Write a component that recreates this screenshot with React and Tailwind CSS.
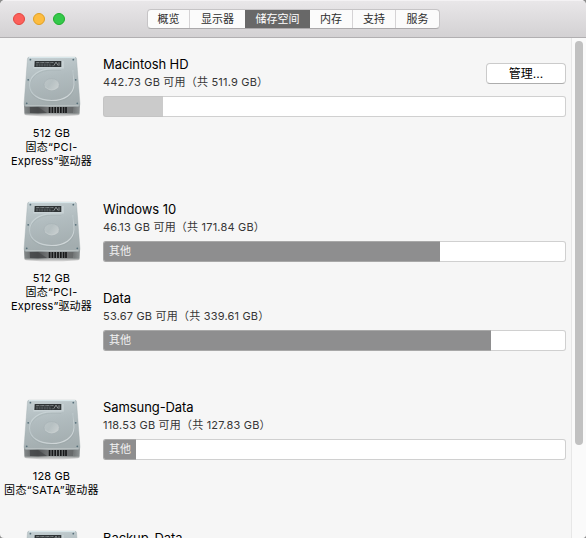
const FONT = 'font-[Inter,"Noto_Sans_CJK_SC",sans-serif]';

const tabs = [
  { label: '概览', cls: 'w-[42px]' },
  { label: '显示器', cls: 'w-[55px]' },
  { label: '储存空间', cls: 'w-[65px]', active: true },
  { label: '内存', cls: 'w-[43px]' },
  { label: '支持', cls: 'w-[43px]' },
  { label: '服务', cls: 'w-[43px]' },
];

const drives = [
  {
    height: 'h-[145px]',
    label: [
      { text: '512 GB', cls: 'tracking-[0.15px]' },
      { text: '固态“PCI-', cls: 'tracking-[0.3px]' },
      { text: 'Express”驱动器', cls: 'tracking-[0.15px]' },
    ],
    volumes: [{ name: 'Macintosh HD', free: '442.73 GB 可用（共 511.9 GB）', used: 60, light: true, manage: true }],
  },
  {
    height: 'h-[198px]',
    label: [
      { text: '512 GB', cls: 'tracking-[0.15px]' },
      { text: '固态“PCI-', cls: 'tracking-[0.3px]' },
      { text: 'Express”驱动器', cls: 'tracking-[0.15px]' },
    ],
    volumes: [
      { name: 'Windows 10', free: '46.13 GB 可用（共 171.84 GB）', used: 337 },
      { name: 'Data', free: '53.67 GB 可用（共 339.61 GB）', used: 388 },
    ],
  },
  {
    height: 'h-[131px]',
    label: [
      { text: '128 GB', cls: 'tracking-[0.15px]' },
      { text: '固态“SATA”驱动器', cls: 'tracking-[0.35px]' },
    ],
    volumes: [{ name: 'Samsung-Data', free: '118.53 GB 可用（共 127.83 GB）', used: 33 }],
  },
  {
    height: 'h-[131px]',
    label: [],
    volumes: [{ name: 'Backup-Data' }],
  },
];

function DriveIcon({ id }) {
  const body = `body-${id}`;
  const front = `front-${id}`;
  const rim = `rim-${id}`;
  const hub = `hub-${id}`;
  return (
    <svg width="60" height="62" viewBox="0 0 60 62" className="block">
      <defs>
        <linearGradient id={body} x1="0.1" y1="0" x2="0.3" y2="1">
          <stop offset="0" stopColor="#c3ced1" />
          <stop offset="0.45" stopColor="#b1bcbf" />
          <stop offset="1" stopColor="#a3adaf" />
        </linearGradient>
        <linearGradient id={front} x1="0" y1="0" x2="1" y2="0">
          <stop offset="0" stopColor="#858a8b" />
          <stop offset="0.12" stopColor="#6d7071" />
          <stop offset="0.25" stopColor="#4d4f50" />
          <stop offset="0.45" stopColor="#a0a3a3" />
          <stop offset="0.9" stopColor="#777b7c" />
          <stop offset="1" stopColor="#8f9596" />
        </linearGradient>
        <linearGradient id={rim} x1="0" y1="0" x2="0.6" y2="1">
          <stop offset="0" stopColor="#ced8da" />
          <stop offset="0.5" stopColor="#bbc6c9" />
          <stop offset="1" stopColor="#cfd6d8" />
        </linearGradient>
        <linearGradient id={hub} x1="0" y1="0" x2="1" y2="0.5">
          <stop offset="0" stopColor="#bcc5c7" />
          <stop offset="0.5" stopColor="#b6c0c2" />
          <stop offset="1" stopColor="#c6cdce" />
        </linearGradient>
      </defs>
      <ellipse cx="30" cy="58.6" rx="28" ry="1.7" fill="#000" opacity="0.17" />
      <path d="M2 47.5 L58 47.5 L57.6 57.2 Q57.5 58.3 56.3 58.3 L3.7 58.3 Q2.5 58.3 2.4 57.2Z" fill={`url(#${front})`} />
      <path d="M7.5 51 H51.5 L51 57 H8Z" fill="#555859" opacity="0.55" />
      <path d="M8 51 H16 L25 57 H8Z" fill="#424445" opacity="0.65" />
      <path d="M3 57.9H57" stroke="#a9adad" strokeWidth="0.7" />
      <path d="M7 1.2 H53 Q54.3 1.2 54.5 2.6 L58 48 Q58.1 50.2 56.5 50.2 H3.5 Q1.9 50.2 2 48 L5.5 2.6 Q5.7 1.2 7 1.2Z" fill={`url(#${body})`} stroke="#a0abae" strokeWidth="0.4" />
      <path d="M7 1.6H53" stroke="#dceaee" strokeWidth="1" />
      <path d="M3.5 49.8H56.5" stroke="#c4cbcc" strokeWidth="0.9" />
      <g transform="translate(0 -1)">
        <path d="M50.8 16.5 L52.2 29.5 C52.1 40 43 45.8 29.5 45.8 C17 45.8 7.4 40 7.6 30.5 C7.8 20.5 18 14.2 30 14.2 L39.2 14.2" fill="none" stroke="#8e999c" strokeWidth="1.2" opacity="0.2" transform="translate(0 .9)" />
        <path d="M39.5 13.9 H29.5 C17 13.9 7.6 20.7 7.6 30.2 C7.6 39.4 17 45.5 29.5 45.5 C42.5 45.5 51.7 39.3 52 29.5 C52.1 25 50.9 20 50.8 15" fill="none" stroke={`url(#${rim})`} strokeWidth="1.1" />
        <ellipse cx="29.6" cy="29.5" rx="7.6" ry="5.9" fill={`url(#${hub})`} stroke="#9faaad" strokeWidth="0.4" />
        <path d="M22.9 31.8 Q29.6 38 36.5 31.8" fill="none" stroke="#ccd3d4" strokeWidth="0.6" />
      </g>
      <path d="M11.8 5 H41.8 V12.5 H11.3Z" fill="#c8d2d5" />
      <path d="M12.7 4.9 H39.3 V11.1 H12.3Z" fill="#2e3335" />
      <path d="M14.2 6.6H31.5" stroke="#92999b" strokeWidth="0.8" strokeDasharray="3 0.5 1 0.5" />
      <path d="M14 8.2H28.5M14 9.8H32" stroke="#6f7678" strokeWidth="0.7" strokeDasharray="2 0.6" />
      <path d="M31.8 9.7 L34 6.1 L36.1 9.5M37 6.2V9.7" fill="none" stroke="#a4aaab" strokeWidth="0.8" />
      <g fill="#566f79">
        <circle cx="8.4" cy="3.7" r="0.9" />
        <circle cx="51.3" cy="3.7" r="0.9" />
        <circle cx="6.2" cy="23.8" r="0.9" />
        <circle cx="53.7" cy="23.8" r="0.9" />
        <circle cx="4.7" cy="47.3" r="0.9" />
        <circle cx="55.3" cy="47.3" r="0.9" />
      </g>
      <path d="M27 51H44V57H27Z" fill="#7b7e7f" />
      <path d="M27.6 51V57M30.4 51V57M33.2 51V57M36 51V57M38.8 51V57M41.6 51V57M44 51V57" stroke="#171819" strokeWidth="1.7" />
    </svg>
  );
}

function Volume({ volume }) {
  return (
    <div className="h-[89px] w-[463px]">
      <div className="flex h-[41px] justify-between">
        <div>
          <div className="h-[18px] whitespace-nowrap text-[13px] leading-[18px] tracking-[-0.08px] text-black">{volume.name}</div>
          {volume.free && (
            <div className="h-[18px] whitespace-nowrap text-[11px] leading-[18px] tracking-[0.2px] text-[#363636]">{volume.free}</div>
          )}
        </div>
        {volume.manage && (
          <button className="mt-2 h-[21px] w-20 rounded-[4px] border border-[#cbcbcb] border-b-[#adadad] bg-white text-[12px] leading-[19px] text-black">
            管理...
          </button>
        )}
      </div>
      {volume.used && (
        <div className="flex h-[21px]">
          <div
            className={`h-full shrink-0 rounded-l-[3px] border border-r-0 pl-[5px] text-[11px] leading-[19px] text-[#f2f2f2] ${
              volume.light ? 'border-[#c4c4c4] bg-[#cbcbcb]' : 'border-[#a8a8a8] bg-[#8e8e8f]'
            }`}
            style={{ width: volume.used }}
          >
            {volume.light ? '' : '其他'}
          </div>
          <div className="h-full flex-1 rounded-r-[3px] border border-l-0 border-[#d0d0d0] bg-white" />
        </div>
      )}
    </div>
  );
}

export default function App() {
  return (
    <div className={`flex h-[538px] w-[586px] flex-col overflow-hidden bg-[#8c8c8c] ${FONT}`}>
      <div className="flex h-full flex-col overflow-hidden rounded-t-[5px] rounded-b-[4px] bg-[#f6f6f6]">
        <header className="flex h-[38px] shrink-0 border-t border-b border-t-[#f4f2f4] border-b-[#b1afb1] bg-linear-to-b from-[#e9e7e9] to-[#d3d1d3]">
          <div className="mt-3 ml-[13px] flex h-3 w-[134px] gap-2">
            <span className="size-3 rounded-full border border-[#e2463f] bg-[#fc605b]" />
            <span className="size-3 rounded-full border border-[#dfa023] bg-[#fdbc40]" />
            <span className="size-3 rounded-full border border-[#1dad2b] bg-[#34c84a]" />
          </div>
          <div className="mt-2 flex h-5 overflow-hidden rounded-[4px] border border-[#c6c4c6] border-b-[#aba9ab] bg-[#fbfbfb]">
            {tabs.map((t, i) => (
              <div
                key={t.label}
                className={`h-full text-center text-[11px] leading-[18px] ${t.cls} ${
                  t.active ? 'bg-[#686868] text-white' : 'text-[#2e2e2e]'
                } ${i === 5 || i === 1 || t.active ? '' : 'border-r border-[#d5d3d5]'}`}
              >
                {t.label}
              </div>
            ))}
          </div>
        </header>
        <div className="flex min-h-0 flex-1">
          <main className="w-[571px] overflow-hidden pt-[17px]">
            {drives.map((d, i) => (
              <section key={i} className={`flex ${d.height}`}>
                <div className="flex w-[103px] flex-col items-center">
                  <div className="h-[71px] pt-px">
                    <DriveIcon id={i} />
                  </div>
                  {d.label.map((line) => (
                    <div
                      key={line.text}
                      className={`h-[14px] whitespace-nowrap text-[11px] leading-[14px] text-black ${line.cls}`}
                    >
                      {line.text}
                    </div>
                  ))}
                </div>
                <div>
                  {d.volumes.map((v) => (
                    <Volume key={v.name} volume={v} />
                  ))}
                </div>
              </section>
            ))}
          </main>
          <div className="w-[15px] border-l border-[#e7e7e7] bg-[#fafafa] pt-[3px] pl-[3px]">
            <div className="h-[404px] w-2 rounded-full bg-[#c1c1c1]" />
          </div>
        </div>
      </div>
    </div>
  );
}
